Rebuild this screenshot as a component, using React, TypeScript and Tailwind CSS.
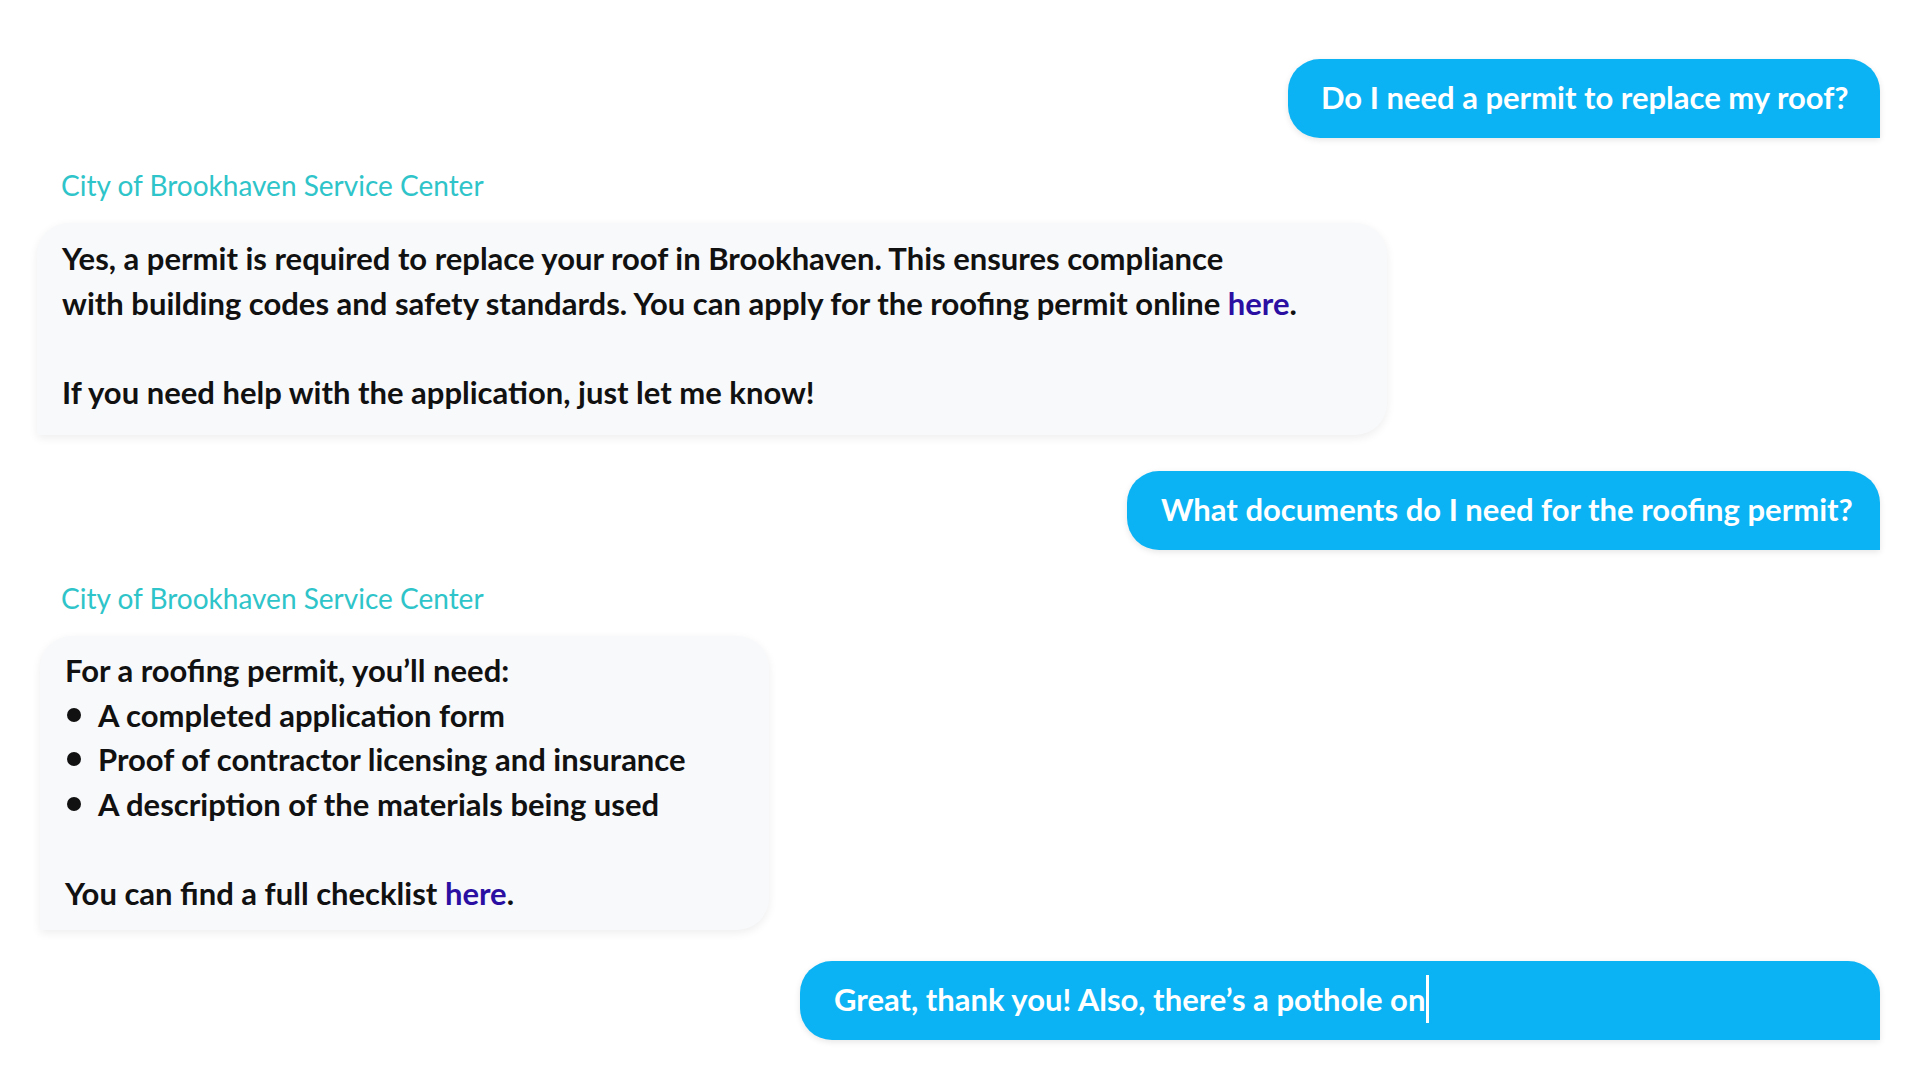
import React from "react";

const font = { fontFamily: '"Lato", "Noto Sans", sans-serif' };

function UserBubble({ children, className = "" }: { children: React.ReactNode; className?: string }) {
  return (
    <div className="flex justify-end">
      <div
        className={`bg-[#0bb3f4] text-white font-bold text-[31px] leading-[44px] h-[79px] flex items-center pb-[4px] rounded-tl-[32px] rounded-tr-[32px] rounded-bl-[32px] shadow-[0_2px_6px_rgba(0,0,0,0.10)] ${className}`}
      >
        {children}
      </div>
    </div>
  );
}

function BotName() {
  return <div className="text-[#2ec4c9] text-[28px] leading-[40px] pl-[24px]">City of Brookhaven Service Center</div>;
}

function Bullet({ children }: { children: React.ReactNode }) {
  return (
    <div className="flex items-center">
      <span className="w-[33px] flex items-center">
        <span className="inline-block w-[14px] h-[14px] rounded-full bg-[#111] ml-[2px]" />
      </span>
      <span>{children}</span>
    </div>
  );
}

export default function App() {
  return (
    <div className="w-[1920px] h-[1080px] bg-white overflow-hidden pt-[59px] pl-[37px] pr-[40px]" style={font}>
      <UserBubble className="w-[592px] pl-[33px]">Do I need a permit to replace my roof?</UserBubble>

      <div className="mt-[27px]">
        <BotName />
      </div>

      <div className="mt-[18px] w-[1350px] bg-[#f8f9fb] rounded-tl-[32px] rounded-tr-[32px] rounded-br-[32px] shadow-[0_3px_10px_rgba(0,0,0,0.07)] pl-[25px] pt-[13px] pb-[21px] text-[#111] font-bold text-[31px] leading-[44.5px]">
        <div>Yes, a permit is required to replace your roof in Brookhaven. This ensures compliance</div>
        <div>
          with building codes and safety standards. You can apply for the roofing permit online{" "}
          <span className="text-[#2b0fa3]">here</span>.
        </div>
        <div className="h-[44.5px]" />
        <div>If you need help with the application, just let me know!</div>
      </div>

      <div className="mt-[36px]">
        <UserBubble className="w-[753px] pl-[34px]">What documents do I need for the roofing permit?</UserBubble>
      </div>

      <div className="mt-[28px]">
        <BotName />
      </div>

      <div className="mt-[18px] ml-[3px] w-[729px] bg-[#f8f9fb] rounded-tl-[32px] rounded-tr-[32px] rounded-br-[32px] shadow-[0_3px_10px_rgba(0,0,0,0.07)] pl-[25px] pt-[12px] pb-[15px] text-[#111] font-bold text-[31px] leading-[44.5px]">
        <div>For a roofing permit, you’ll need:</div>
        <Bullet>A completed application form</Bullet>
        <Bullet>Proof of contractor licensing and insurance</Bullet>
        <Bullet>A description of the materials being used</Bullet>
        <div className="h-[44.5px]" />
        <div>
          You can find a full checklist <span className="text-[#2b0fa3]">here</span>.
        </div>
      </div>

      <div className="mt-[31px]">
        <UserBubble className="w-[1080px] pl-[34px]">
          <span>Great, thank you! Also, there’s a pothole on</span>
          <span className="inline-block w-[3px] h-[48px] bg-white ml-[1px]" />
        </UserBubble>
      </div>
    </div>
  );
}
